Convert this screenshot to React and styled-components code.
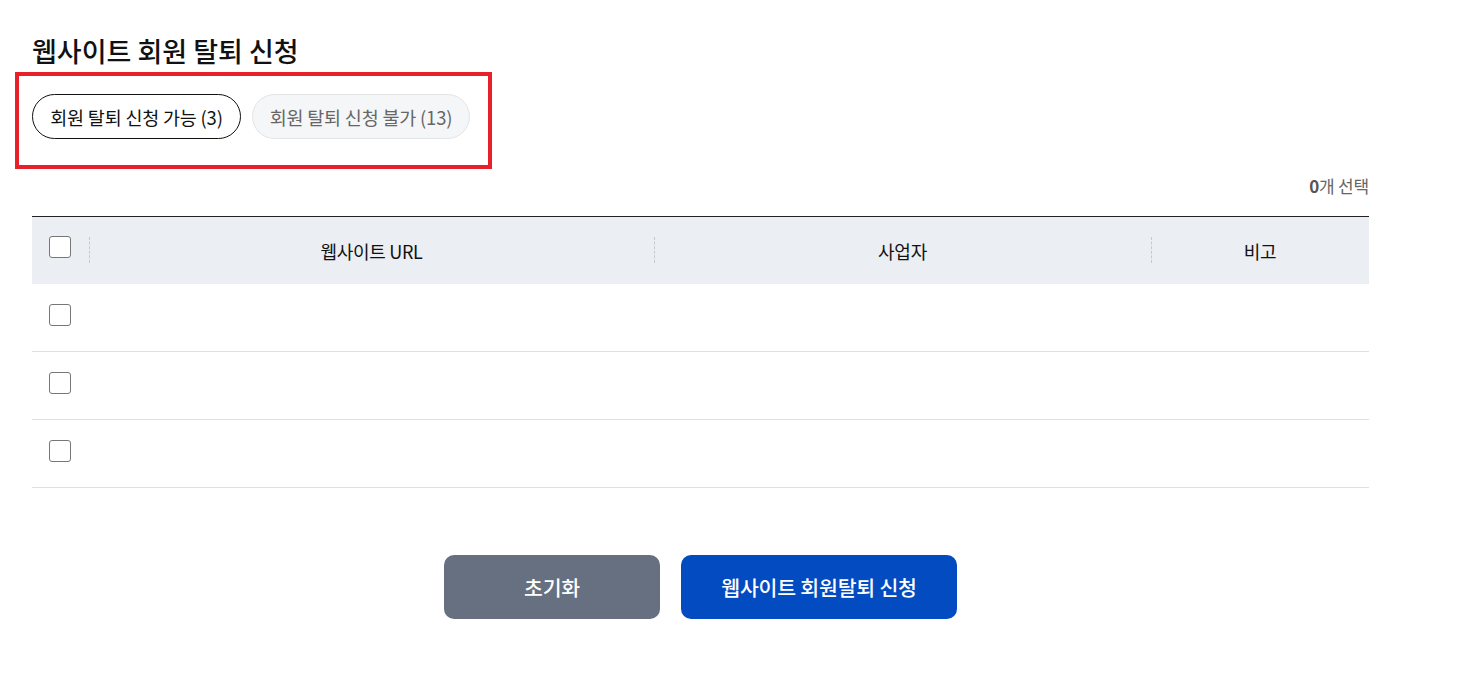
import React from "react";
import styled, { createGlobalStyle } from "styled-components";

const Global = createGlobalStyle`
  html, body { margin: 0; padding: 0; background: #fff; }
  body { font-family: "Noto Sans CJK KR", "Noto Sans", sans-serif; color: #111; }
  * { box-sizing: border-box; }
`;

const Page = styled.div`
  width: 1337px;
  margin-left: 32px;
  padding-top: 30px;
`;

const Title = styled.h2`
  margin: 0;
  font-size: 27px;
  font-weight: 500;
  line-height: 42px;
  color: #111;
`;

const TabArea = styled.div`
  position: relative;
  display: flex;
  gap: 11px;
  padding-top: 22px;
`;

const Highlight = styled.div`
  position: absolute;
  left: -17px;
  top: 0px;
  width: 477px;
  height: 97px;
  border: 4px solid #e8202a;
  pointer-events: none;
`;

const Chip = styled.button`
  height: 45px;
  width: ${(p) => p.$w}px;
  padding: 0;
  border-radius: 23px;
  border: 1px solid ${(p) => (p.$active ? "#111" : "#e2e4e8")};
  background: ${(p) => (p.$active ? "#fff" : "#f5f6f8")};
  color: ${(p) => (p.$active ? "#111" : "#666")};
  font-family: inherit;
  font-size: 18.5px;
  letter-spacing: -0.2px;
  cursor: pointer;
`;

const Count = styled.div`
  margin-top: 35px;
  text-align: right;
  font-size: 17px;
  color: #666;
  line-height: 24px;
  letter-spacing: -0.2px;
  b { font-weight: 700; color: #555; }
`;

const Table = styled.div`
  margin-top: 18px;
  border-top: 1px solid #222;
`;

const Row = styled.div`
  display: grid;
  grid-template-columns: 57px 565px 497px 218px;
  align-items: center;
  height: ${(p) => (p.$head ? 67 : 68)}px;
  background: ${(p) => (p.$head ? "#ebeef2" : "#fff")};
  border-bottom: ${(p) => (p.$head ? "none" : "1px solid #e0e0e0")};
`;

const Cell = styled.div`
  height: 100%;
  display: flex;
  align-items: center;
  justify-content: center;
  font-size: 18px;
  color: #111;
  letter-spacing: -0.3px;
  position: relative;
`;

const CheckCell = styled(Cell)`
  justify-content: flex-start;
  align-items: flex-start;
  padding-left: 17px;
  padding-top: ${(p) => (p.$head ? 19 : 20)}px;
`;

const Divider = styled.span`
  position: absolute;
  left: 0;
  top: 20px;
  height: 26px;
  border-left: 1px dashed #c4cad2;
`;

const Box = styled.span`
  width: 22px;
  height: 22px;
  border: 1px solid #777;
  border-radius: 3px;
  background: #fff;
  display: inline-block;
`;

const Buttons = styled.div`
  display: flex;
  justify-content: center;
  gap: 21px;
  margin-top: 67px;
`;

const Btn = styled.button`
  height: 64px;
  width: ${(p) => p.$w}px;
  border: none;
  border-radius: 10px;
  background: ${(p) => (p.$primary ? "#034bc0" : "#667080")};
  color: #fff;
  font-family: inherit;
  font-size: 20.5px;
  font-weight: 500;
  letter-spacing: -0.2px;
  cursor: pointer;
`;

export default function App() {
  const rows = [0, 1, 2];
  return (
    <>
      <Global />
      <Page>
        <Title>웹사이트 회원 탈퇴 신청</Title>
        <TabArea>
          <Chip $active $w={209}>회원 탈퇴 신청 가능 (3)</Chip>
          <Chip $w={218}>회원 탈퇴 신청 불가 (13)</Chip>
          <Highlight />
        </TabArea>
        <Count>
          <b>0</b>개 선택
        </Count>
        <Table>
          <Row $head>
            <CheckCell $head><Box /></CheckCell>
            <Cell><Divider />웹사이트 URL</Cell>
            <Cell><Divider />사업자</Cell>
            <Cell><Divider />비고</Cell>
          </Row>
          {rows.map((r) => (
            <Row key={r}>
              <CheckCell><Box /></CheckCell>
              <Cell />
              <Cell />
              <Cell />
            </Row>
          ))}
        </Table>
        <Buttons>
          <Btn $w={216}>초기화</Btn>
          <Btn $w={276} $primary>웹사이트 회원탈퇴 신청</Btn>
        </Buttons>
      </Page>
    </>
  );
}
